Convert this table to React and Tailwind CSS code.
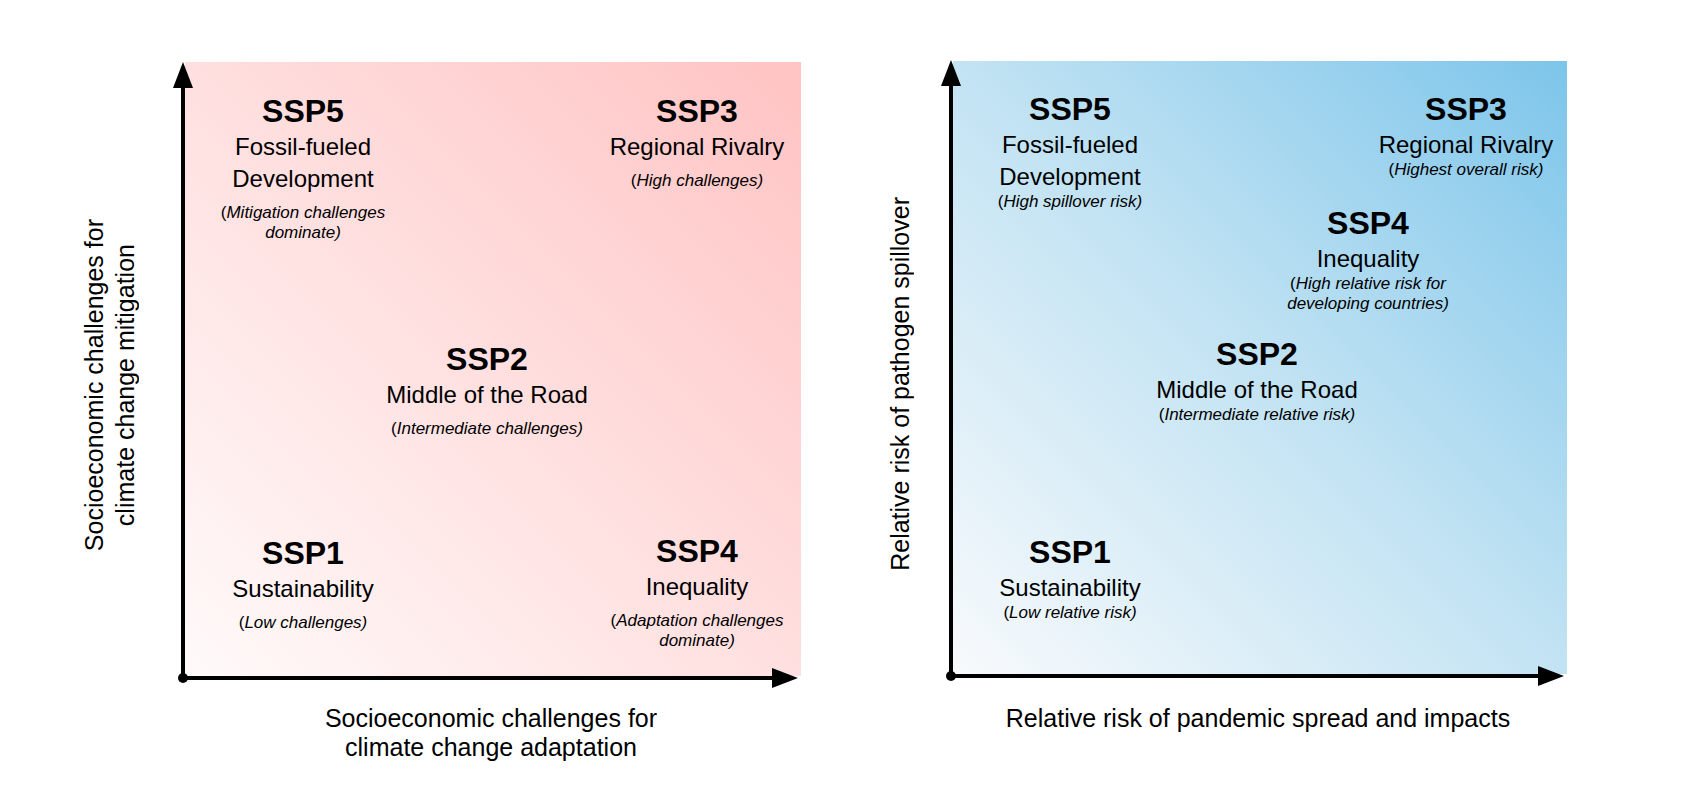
const leftBlocks = [
  { x: 122, y: 33, title: 'SSP5', lines: ['Fossil-fueled', 'Development'], notes: ['Mitigation challenges', 'dominate'] },
  { x: 516, y: 33, title: 'SSP3', lines: ['Regional Rivalry'], notes: ['High challenges'] },
  { x: 306, y: 281, title: 'SSP2', lines: ['Middle of the Road'], notes: ['Intermediate challenges'] },
  { x: 122, y: 475, title: 'SSP1', lines: ['Sustainability'], notes: ['Low challenges'] },
  { x: 516, y: 473, title: 'SSP4', lines: ['Inequality'], notes: ['Adaptation challenges', 'dominate'] },
];

const rightBlocks = [
  { x: 121, y: 33, title: 'SSP5', lines: ['Fossil-fueled', 'Development'], notes: ['High spillover risk'] },
  { x: 517, y: 33, title: 'SSP3', lines: ['Regional Rivalry'], notes: ['Highest overall risk'] },
  { x: 419, y: 147, title: 'SSP4', lines: ['Inequality'], notes: ['High relative risk for', 'developing countries'] },
  { x: 308, y: 278, title: 'SSP2', lines: ['Middle of the Road'], notes: ['Intermediate relative risk'] },
  { x: 121, y: 476, title: 'SSP1', lines: ['Sustainability'], notes: ['Low relative risk'] },
];

function Scenario({ x, y, title, lines, notes, tight }) {
  return (
    <div
      className="absolute -translate-x-1/2 whitespace-nowrap text-center text-black"
      style={{ left: x, top: y }}
    >
      <p className="text-[32px] leading-[36px] font-bold">{title}</p>
      <div className="mt-[2px] text-[24px] leading-[32px]">
        {lines.map((l) => (
          <p key={l}>{l}</p>
        ))}
      </div>
      <div className={tight ? '-mt-[1px] text-[17px] leading-[20px]' : 'mt-[8px] text-[17px] leading-[20px]'}>
        {notes.map((n, i) => (
          <p key={n}>
            {i === 0 && <span>(</span>}
            <span className="italic">{n}</span>
            {i === notes.length - 1 && <span className="italic">)</span>}
          </p>
        ))}
      </div>
    </div>
  );
}

function Axes({ w }) {
  return (
    <svg
      className="absolute inset-0 overflow-visible pointer-events-none"
      width={w}
      height={620}
      viewBox={`0 0 ${w} 620`}
    >
      <line x1="2" y1="618" x2="2" y2="22" stroke="#000" strokeWidth="4" />
      <polygon points="2,2 -8,28 12,28" fill="#000" />
      <line x1="2" y1="618" x2={w - 26} y2="618" stroke="#000" strokeWidth="4" />
      <polygon points={`${w - 3},618 ${w - 29},608 ${w - 29},628`} fill="#000" />
      <circle cx="2" cy="618" r="5" fill="#000" />
    </svg>
  );
}

export default function App() {
  return (
    <div className="w-[1698px] h-[804px] bg-white flex items-start font-['Liberation_Sans',Arial,sans-serif] text-black">

      {/* Climate challenges panel */}
      <div className="ml-[60px] mt-[60px] grid grid-cols-[100px_620px] gap-x-[21px]">
        <div className="h-[620px] pt-[30px] flex items-center justify-center">
          <p className="[writing-mode:vertical-rl] rotate-180 text-center text-[25px] leading-[31px] whitespace-nowrap">
            Socioeconomic challenges for<br />climate change mitigation
          </p>
        </div>
        <div className="relative w-[620px] h-[620px] pl-[4px] pt-[2px] pb-[4px]">
          <div className="w-full h-full bg-linear-to-tr from-[#fffafa] via-[#ffdfdf] to-[#ffc3c3]" />
          {leftBlocks.map((b) => (
            <Scenario key={b.title} {...b} />
          ))}
          <Axes w={620} />
        </div>
        <p className="col-start-2 mt-[24px] text-center text-[25px] leading-[29px]">
          Socioeconomic challenges for<br />climate change adaptation
        </p>
      </div>

      {/* Pandemic risk panel */}
      <div className="ml-[69px] mt-[58px] grid grid-cols-[60px_618px] gap-x-[19px]">
        <div className="h-[620px] pt-[32px] flex items-center justify-center">
          <p className="[writing-mode:vertical-rl] rotate-180 text-[25px] leading-[31px] whitespace-nowrap">
            Relative risk of pathogen spillover
          </p>
        </div>
        <div className="relative w-[618px] h-[620px] pl-[4px] pt-[3px] pb-[4px]">
          <div className="w-full h-full bg-linear-to-tr from-[#f8fafc] via-[#c2e3f3] to-[#7cc5ea]" />
          {rightBlocks.map((b) => (
            <Scenario key={b.title} {...b} tight />
          ))}
          <Axes w={618} />
        </div>
        <p className="col-start-2 mt-[26px] text-center text-[25px] leading-[29px]">
          Relative risk of pandemic spread and impacts
        </p>
      </div>
    </div>
  );
}
